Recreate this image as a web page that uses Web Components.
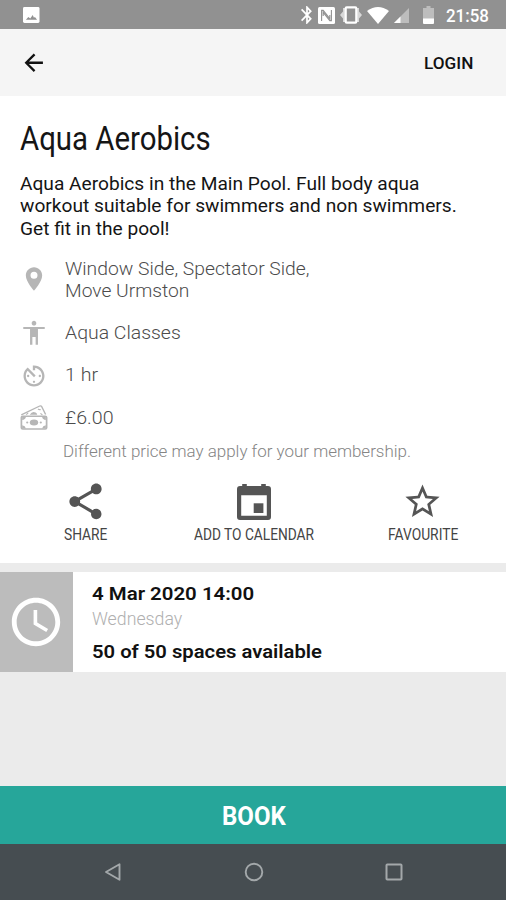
<!DOCTYPE html>
<html lang="en">
<head>
<meta charset="utf-8">
<title>Aqua Aerobics</title>
<style>
html,body{margin:0;height:100%;background:#ebebeb}
body{font-family:Roboto,"Liberation Sans",sans-serif;overflow:hidden}
</style>
</head>
<body>
<booking-app></booking-app>
<script>
const ICONS={
image:['0 0 17 17','<path fill="#fff" d="M1.5 0h14Q17 0 17 1.5v14q0 1.5-1.500 1.500h-14Q0 17 0 15.500v-14Q0 0 1.500 0z"/><path fill="#919191" d="M3 13.500l2.500-2.800 2 1.500 2.500-3.700 1.300 3 1-.8 2.200 2.800z"/>'],
back:['0 0 24 24','<path d="M20 11H7.83l5.59-5.59L12 4l-8 8 8 8 1.410-1.410L7.830 13H20v-2z"/>'],
bluetooth:['5 2 14 20','<path d="M17.710 7.710L12 2h-1v7.590L6.410 5 5 6.410 10.590 12 5 17.590 6.410 19 11 14.410V22h1l5.710-5.710-4.300-4.290 4.300-4.290zM13 5.830l1.880 1.880L13 9.590V5.830zm1.880 10.460L13 18.170v-3.760l1.880 1.880z"/>'],
nfc:['0 0 17 17','<rect width="17" height="17" rx="1.500"/><path d="M3.600 14V3.400h1.600l6.600 8.200V8M13.400 3v10.600h-1.600L5.200 5.400V9" fill="none" stroke="#919191" stroke-width="1.100"/>'],
vibrate:['0 0 22 18','<path opacity=".65" d="M5 2v14H3v-3.500L0 9l3-3.500V2zM17 2v14h2v-3.500L22 9l-3-3.500V2z"/><rect x="5.700" y="1.300" width="10.600" height="15.400" rx="1" fill="#919191" stroke="currentColor" stroke-width="2.200"/>'],
wifi:['0 0 22 17','<path d="M0 4Q11-4 22 4L11 17z"/>'],
signal:['0 0 15 15','<path opacity=".4" d="M15 0v15H0z"/><path d="M6.500 8.500V15H0z"/>'],
battery:['0 0 11 18','<path opacity=".4" d="M3.500 0h4v2H11v11H0V2h3.500z"/><path d="M0 12.500h11V17q0 1-1 1H1q-1 0-1-1z"/>'],
place:['0 0 24 24','<path fill-rule="evenodd" d="M12 2C8.130 2 5 5.130 5 9c0 5.250 7 13 7 13s7-7.750 7-13c0-3.870-3.130-7-7-7zm0 9.700a3 3 0 1 1 0-6 3 3 0 0 1 0 6z"/>'],
person:['0 0 24 24','<path d="M12 1.600c1.100 0 2 .9 2 2s-.9 2-2 2-2-.9-2-2 .9-2 2-2zm9.200 7H15.400V22h-2v-6.500h-2.800V22h-2V8.600H2.800V6.900h18.400v1.700z"/>'],
timer:['0 0 24 24','<path d="M11 17c0 .55.45 1 1 1s1-.45 1-1-.45-1-1-1-1 .45-1 1zm0-14v4h2V5.080c3.390.49 6 3.390 6 6.920 0 3.870-3.130 7-7 7s-7-3.130-7-7c0-1.680.59-3.220 1.580-4.420L12 13l1.410-1.410-6.800-6.800v.02C4.420 6.450 3 9.050 3 12c0 4.970 4.020 9 9 9 4.970 0 9-4.030 9-9s-4.030-9-9-9h-1zm7 9c0-.55-.45-1-1-1s-1 .45-1 1 .45 1 1 1 1-.45 1-1zM6 12c0 .55.45 1 1 1s1-.45 1-1-.45-1-1-1-1 .45-1 1z"/>'],
money:['1 2 26 26','<g fill="none" stroke="currentColor"><rect x="2.300" y="13.300" width="23.400" height="12.700" rx="1.200" stroke-width="1.600"/><path stroke-width="1.300" d="M2.200 11.800L19.300 3q1.200-.5 1.900.7l3.600 7.900"/><path stroke-width="1.100" d="M6.500 11.500q1.500-.3 2-1.700M17.700 6q1.300 1.100 2.500.4M20 10.300l1.800 1.600"/></g><path d="M10 11.800q2.500-4.300 5.500-2.200 1.500 1 1.500 2.200z"/><ellipse cx="14" cy="19.600" rx="3.900" ry="3"/><circle cx="7.700" cy="19.600" r="1"/><circle cx="20.300" cy="19.600" r="1"/><path d="M3 14h3.500q-.5 2.600-3.500 3zM25 14h-3.500q.5 2.600 3.500 3zM3 25.500v-3.200q2.900.4 3.500 3.200zM25 25.500v-3.200q-2.900.4-3.500 3.200z"/>'],
share:['0 0 24 24','<path d="M18 16.080c-.76 0-1.440.3-1.960.77L8.910 12.700c.05-.23.09-.46.09-.7s-.04-.47-.09-.7l7.050-4.110c.54.5 1.250.81 2.040.81 1.660 0 3-1.340 3-3s-1.340-3-3-3-3 1.340-3 3c0 .24.04.47.09.7L8.040 9.810C7.500 9.310 6.790 9 6 9c-1.660 0-3 1.340-3 3s1.340 3 3 3c.79 0 1.500-.31 2.040-.81l7.120 4.160c-.05.21-.08.43-.08.65 0 1.610 1.310 2.920 2.920 2.920 1.610 0 2.920-1.310 2.920-2.920s-1.310-2.920-2.920-2.920z"/>'],
event:['0 0 34 36','<path fill-rule="evenodd" d="M5.200 0h4.600v2h14.400V0h4.600v2H31q3 0 3 3v28q0 3-3 3H3q-3 0-3-3V5q0-3 3-3h2.200zM4.200 11.300v20.500h25.600V11.300z"/><rect x="16.700" y="19.300" width="9.700" height="9.700"/>'],
star:['0 0 24 24','<path d="M22 9.240l-7.190-.62L12 2 9.190 8.630 2 9.240l5.460 4.730L5.820 21 12 17.270 18.180 21l-1.630-7.030L22 9.240zM12 15.400l-3.760 2.270 1-4.280-3.320-2.880 4.380-.38L12 6.100l1.710 4.040 4.380.38-3.320 2.880 1 4.280L12 15.400z"/>'],
clock:['0 0 24 24','<path d="M11.990 2C6.470 2 2 6.480 2 12s4.470 10 9.990 10C17.520 22 22 17.520 22 12S17.520 2 11.990 2zM12 20c-4.420 0-8-3.580-8-8s3.580-8 8-8 8 3.580 8 8-3.580 8-8 8zm.5-13H11v6l5.250 3.150.75-1.230-4.500-2.670z"/>'],
navback:['0 0 18 20','<path d="M15.500 2.200v15.600L2 10z" fill="none" stroke="currentColor" stroke-width="1.900" stroke-linejoin="round"/>'],
home:['0 0 20 20','<circle cx="10" cy="10" r="8.300" fill="none" stroke="currentColor" stroke-width="1.900"/>'],
recent:['0 0 18 18','<rect x="1.500" y="1.500" width="15" height="15" rx=".8" fill="none" stroke="currentColor" stroke-width="2"/>']
};

class UiIcon extends HTMLElement{
  connectedCallback(){
    const [box,body]=ICONS[this.getAttribute('name')];
    const w=this.getAttribute('w'),h=this.getAttribute('h')||w;
    this.attachShadow({mode:'open'}).innerHTML=
      `<style>:host{display:block;flex:none;width:${w}px;height:${h}px}svg{display:block;width:100%;height:100%}</style><svg viewBox="${box}" preserveAspectRatio="none" fill="currentColor">${body}</svg>`;
  }
}
customElements.define('ui-icon',UiIcon);

/* One line of text, scaled horizontally to the width given in "w". */
class FitLine extends HTMLElement{
  connectedCallback(){
    const w=+this.getAttribute('w');
    this.attachShadow({mode:'open'}).innerHTML=
      `<style>:host{display:block;flex:none;white-space:nowrap;width:${w}px}span{display:inline-block;vertical-align:top;transform-origin:0 0}</style><span><slot></slot></span>`;
    const s=this.shadowRoot.querySelector('span');
    s.style.transform=`scaleX(${w/s.offsetWidth})`;
  }
}
customElements.define('fit-line',FitLine);

const define=(name,html)=>customElements.define(name,class extends HTMLElement{
  connectedCallback(){
    if(this.shadowRoot)return;
    const t=document.createElement('template');
    t.innerHTML=html;
    this.attachShadow({mode:'open'}).append(t.content.cloneNode(true));
  }
});

define('status-bar',`<style>
:host{display:flex;box-sizing:border-box;height:28.500px;padding:2px 18px 0 23px;align-items:center;background:#919191;color:#fff}
.sp{flex:1}.b{margin-left:14px}.g{margin-left:5px}
fit-line{font-size:17.500px;font-weight:500;line-height:22px;margin:1px 0 0 12px}
</style><ui-icon name="image" w="16.500" h="16"></ui-icon><div class="sp"></div>
<ui-icon name="bluetooth" w="12" h="18"></ui-icon><ui-icon class="g" name="nfc" w="17"></ui-icon><ui-icon class="g" name="vibrate" w="22" h="18"></ui-icon><ui-icon class="g" name="wifi" w="22" h="17"></ui-icon><ui-icon class="g" name="signal" w="15"></ui-icon><ui-icon class="b" name="battery" w="11" h="18"></ui-icon><fit-line w="42.500">21:58</fit-line>`);

define('app-header',`<style>
:host{display:flex;box-sizing:border-box;height:67.500px;padding:0 33px 0 20px;align-items:center;justify-content:space-between;background:#f5f5f5;color:#111}
fit-line{font-size:17px;font-weight:500;line-height:22px;margin-top:1px}
</style><ui-icon name="back" w="27.500"></ui-icon><fit-line w="49.500">LOGIN</fit-line>`);

define('info-row',`<style>
:host{display:flex;align-items:center;gap:17px;color:#4c4c4c;font-size:19px;font-weight:300;line-height:22.400px}
</style><slot name="icon"></slot><div><slot></slot></div>`);

define('class-details',`<style>
:host{display:block;box-sizing:border-box;height:467px;padding:23px 0 0 20px;background:#fff;color:#151515}
.title{font-size:33px;line-height:40px}
.desc{font-size:19px;line-height:22.400px;margin-top:14px}
.rows{margin-top:17.800px}
info-row{height:22.400px;margin-bottom:20.300px}
info-row.tall{height:44.800px;margin-bottom:18.900px}
ui-icon{color:#b6b6b6}
.pin{margin-top:-2px}
.note{color:#858585;font-size:17px;font-weight:300;line-height:20px;margin:-8.700px 0 0 43px}
</style>
<fit-line class="title" w="190.500">Aqua Aerobics</fit-line>
<div class="desc"><fit-line w="400">Aqua Aerobics in the Main Pool. Full body aqua</fit-line><fit-line w="437">workout suitable for swimmers and non swimmers.</fit-line><fit-line w="150">Get fit in the pool!</fit-line></div>
<div class="rows">
<info-row class="tall"><ui-icon class="pin" slot="icon" name="place" w="28"></ui-icon><fit-line w="244.500">Window Side, Spectator Side,</fit-line><fit-line w="124.500">Move Urmston</fit-line></info-row>
<info-row><ui-icon slot="icon" name="person" w="28"></ui-icon><fit-line w="115.500">Aqua Classes</fit-line></info-row>
<info-row><ui-icon slot="icon" name="timer" w="28"></ui-icon><fit-line w="33">1 hr</fit-line></info-row>
<info-row><ui-icon slot="icon" name="money" w="28" h="26"></ui-icon><fit-line w="48.500">£6.00</fit-line></info-row>
</div>
<fit-line class="note" w="348">Different price may apply for your membership.</fit-line>
<action-bar></action-bar>`);

define('action-item',`<style>
:host{display:flex;flex-direction:column;align-items:center;color:#555}
.ic{display:flex;height:44px;align-items:center;justify-content:center}
.tx{margin-top:1.200px;color:#444;font-size:16px;line-height:20px}
</style><div class="ic"><slot name="icon"></slot></div><div class="tx"><slot></slot></div>`);

define('action-bar',`<style>
:host{display:grid;grid-template-columns:130px 208px 129px;margin-top:18.500px}
</style>
<action-item><ui-icon slot="icon" name="share" w="43"></ui-icon><fit-line w="43">SHARE</fit-line></action-item>
<action-item><ui-icon slot="icon" name="event" w="34" h="36"></ui-icon><fit-line w="120">ADD TO CALENDAR</fit-line></action-item>
<action-item><ui-icon slot="icon" name="star" w="41"></ui-icon><fit-line w="70">FAVOURITE</fit-line></action-item>`);

define('session-card',`<style>
:host{display:flex;height:100.500px;margin-top:8.500px;background:#fff}
.clock{display:flex;width:72.500px;align-items:center;justify-content:center;background:#bcbcbc;color:#fff}
.body{padding:10.200px 0 0 19px;font-size:19px;line-height:23px;color:#111}
.b{font-weight:600}
.day{color:#b0b0b0;font-weight:300;margin:2.300px 0 10.300px}
</style><div class="clock"><ui-icon name="clock" w="58"></ui-icon></div>
<div class="body"><fit-line class="b" w="162.500">4 Mar 2020 14:00</fit-line><fit-line class="day" w="90.500">Wednesday</fit-line><fit-line class="b" w="230">50 of 50 spaces available</fit-line></div>`);

define('book-button',`<style>
:host{display:flex;height:58px;align-items:center;justify-content:center;background:#26a69a;color:#fff;font-size:25px;font-weight:700;line-height:30px}
fit-line{margin:3px 0 0 1px}
</style><fit-line w="63.500">BOOK</fit-line>`);

define('nav-bar',`<style>
:host{display:flex;box-sizing:border-box;height:56px;padding:0 103px 0 104px;align-items:center;justify-content:space-between;background:#464d51;color:#a3a8aa}
</style><ui-icon name="navback" w="18" h="20"></ui-icon><ui-icon name="home" w="20"></ui-icon><ui-icon name="recent" w="18"></ui-icon>`);

define('booking-app',`<style>
:host{display:flex;flex-direction:column;width:506px;height:900px;background:#ebebeb}
.sp{flex:1}
status-bar,app-header,class-details,session-card,book-button,nav-bar{flex:none}
</style><status-bar></status-bar><app-header></app-header><class-details></class-details><session-card></session-card><div class="sp"></div><book-button></book-button><nav-bar></nav-bar>`);
</script>
</body>
</html>
